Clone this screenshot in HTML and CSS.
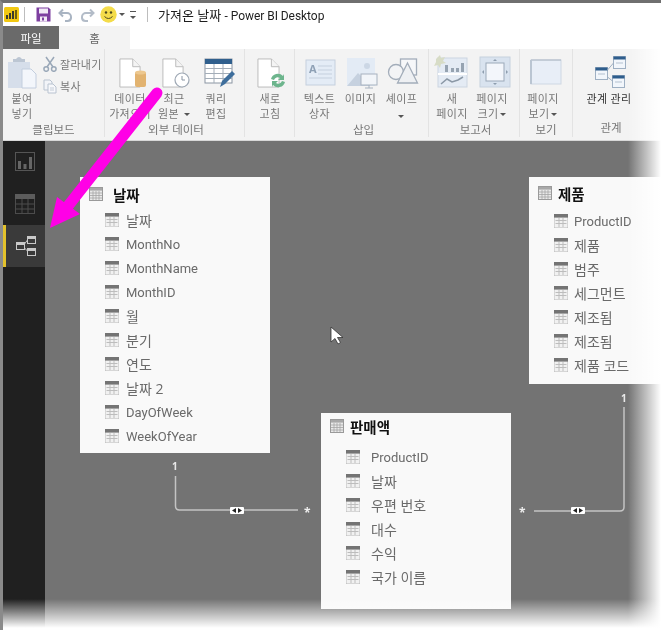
FILE: index.html
```html
<!DOCTYPE html>
<html lang="ko">
<head>
<meta charset="utf-8">
<title>가져온 날짜 - Power BI Desktop</title>
<link rel="stylesheet" href="styles.css">
</head>
<body>
<svg class="defs" width="0" height="0" aria-hidden="true">
  <symbol id="field" viewBox="0 0 14 14">
    <rect x="0" y="0" width="14" height="14" fill="#f1f1f1" stroke="#b0b0b0" stroke-width=".8"/>
    <rect x="0" y="0" width="14" height="3.600" fill="#747474"/>
    <path d="M1.500 6.500h11M1.500 9.500h11M5 4v9M9 4v9" stroke="#bdbdbd" stroke-width="1" fill="none"/>
  </symbol>
  <symbol id="tablehead" viewBox="0 0 14 14">
    <rect x=".5" y=".5" width="13" height="13" fill="#e9e9e9" stroke="#9a9a9a"/>
    <rect x="1" y="1" width="12" height="2.600" fill="#a8a8a8"/>
    <path d="M1 6h12M1 8.500h12M1 11h12M4 4v9M7 4v9M10 4v9" stroke="#a5a5a5" stroke-width=".8" fill="none"/>
  </symbol>
  <symbol id="doc" viewBox="0 0 24 31" preserveAspectRatio="none">
    <path d="M1 1h14l8 8v21H1z" fill="#fff" stroke="#b9b9b9"/>
    <path d="M15 1v8h8" fill="#f4f4f4" stroke="#b9b9b9"/>
  </symbol>
</svg>
<div class="app">
  <header class="titlebar">
    <svg class="qa-logo" width="15" height="15" viewBox="0 0 15 15"><rect width="15" height="15" rx="1.500" fill="#f2c811"/><path d="M2 12V8h2v4zM5 12V6h2v6zM8 12V4h2v8z" fill="#3a3a2a"/><path d="M11 12V3h2v9z" fill="#6b5d10"/></svg>
    <span class="qa-sep"></span>
    <svg class="qa-save" width="15" height="15" viewBox="0 0 15 15"><path d="M.5.5h12l2 2v12H.5z" fill="#7d3fa0"/><rect x="3" y="1.500" width="9" height="5" fill="#f1e9f6"/><rect x="4" y="9.500" width="7" height="5" fill="#f1e9f6"/><rect x="6" y="10.500" width="2" height="3" fill="#7d3fa0"/></svg>
    <svg class="qa-undo" width="15" height="14" viewBox="0 0 15 14"><path d="M5 1.500 1.500 5 5 8.500M2 5h7a4 4 0 0 1 4 4v1a3.500 3.500 0 0 1-3.500 3H7" fill="none" stroke="#a9b4c2" stroke-width="2"/></svg>
    <svg class="qa-redo" width="15" height="14" viewBox="0 0 15 14"><path d="M10 1.500 13.500 5 10 8.500M13 5H6a4 4 0 0 0-4 4v1a3.500 3.500 0 0 0 3.500 3H8" fill="none" stroke="#b3bcc8" stroke-width="2"/></svg>
    <svg class="qa-smile" width="17" height="17" viewBox="0 0 17 17"><circle cx="8.500" cy="8.500" r="8.200" fill="#f4dc4a"/><circle cx="6" cy="6.500" r="1.200" fill="#4d4a20"/><circle cx="11" cy="6.500" r="1.200" fill="#4d4a20"/><path d="M4.500 10.500q4 4 8 0" fill="none" stroke="#4d4a20"/></svg>
    <span class="caret qa-caret"></span>
    <span class="qa-more"><span class="caret"></span></span>
    <span class="qa-sep qa-sep-2"></span>
    <h1 class="title">가져온 날짜 <span class="title-en">- Power BI Desktop</span></h1>
  </header>

  <nav class="tabs">
    <span class="tab tab-file">파일</span>
    <span class="tab tab-home">홈</span>
  </nav>

  <section class="ribbon">
    <div class="group g-clip">
      <div class="items">
        <div class="btn w38">
          <svg class="ico" width="44" height="38" viewBox="0 0 44 38"><rect x="8" y="9" width="22" height="26" fill="#d6deea"/><path d="M13 9V6h3q3-4 6 0h3v3z" fill="#bcc6d3"/><path d="M22 16h9l5 5v14H22z" fill="#f3f6fb" stroke="#c3cede"/></svg>
          <span class="lbl">붙여<br>넣기</span>
        </div>
        <div class="small">
          <div class="s-row s-cut">
            <svg width="14" height="16" viewBox="0 0 14 16"><path d="M3 1l7 10M11 1 4 11" stroke="#9aa8b8" stroke-width="1.500" fill="none"/><circle cx="3.200" cy="13" r="2.300" fill="none" stroke="#9aa8b8" stroke-width="1.500"/><circle cx="10.800" cy="13" r="2.300" fill="none" stroke="#9aa8b8" stroke-width="1.500"/></svg>
            <span>잘라내기</span>
          </div>
          <div class="s-row s-copy">
            <svg width="14" height="15" viewBox="0 0 14 15"><path d="M1 1h6l2 2v8H1z" fill="#f2f4f8" stroke="#b9c3d0"/><path d="M5 5h5l3 3v6H5z" fill="#f7f8fb" stroke="#b9c3d0"/><path d="M7 9h4M7 11h4" stroke="#c4ccd7"/></svg>
            <span>복사</span>
          </div>
        </div>
      </div>
      <div class="g-name">클립보드</div>
    </div>

    <div class="group g-ext">
      <div class="items">
        <div class="btn w44">
          <svg class="ico" width="44" height="38" viewBox="0 0 44 38"><use href="#doc" x="11" y="5" width="22" height="30"/><rect x="27" y="19" width="11" height="15" rx="2" fill="#e2b370"/><ellipse cx="32.500" cy="19.500" rx="5.500" ry="2" fill="#edc88f"/></svg>
          <span class="lbl">데이터<br>가져오기</span>
        </div>
        <div class="btn w44">
          <svg class="ico" width="44" height="38" viewBox="0 0 44 38"><use href="#doc" x="10" y="5" width="22" height="30"/><circle cx="30" cy="27" r="7" fill="#fff" stroke="#9ea8b4" stroke-width="1.200"/><path d="M30 23v4h3" fill="none" stroke="#8a95a3"/></svg>
          <span class="lbl">최근<br>원본<i class="caret lbl-caret"></i></span>
        </div>
        <div class="btn w40">
          <svg class="ico" width="44" height="38" viewBox="0 0 44 38"><rect x="11" y="6" width="27" height="24" fill="#fff" stroke="#8b96a3"/><rect x="11" y="6" width="27" height="5" fill="#2f5f8d"/><path d="M11 15.500h27M11 20.500h27M11 25.500h27M20 11v19M29 11v19" stroke="#a3adb8"/><path d="M26 34l2-6 10-10 3 3-10 10z" fill="#3e6e9c"/></svg>
          <span class="lbl">쿼리<br>편집</span>
        </div>
      </div>
      <div class="g-name">외부 데이터</div>
    </div>

    <div class="group g-refresh">
      <div class="items">
        <div class="btn w50">
          <svg class="ico" width="44" height="38" viewBox="0 0 44 38"><use href="#doc" x="9" y="5" width="23" height="30"/><path d="M23 26a7 7 0 0 1 12-3l1-2v6h-6l2-2a4 4 0 0 0-6 2zM37 29a7 7 0 0 1-12 3l-1 2v-6h6l-2 2a4 4 0 0 0 6-2z" fill="#6db58d"/></svg>
          <span class="lbl">새로<br>고침</span>
        </div>
      </div>
    </div>

    <div class="group g-insert">
      <div class="items">
        <div class="btn w41">
          <svg class="ico" width="44" height="38" viewBox="0 0 44 38"><rect x="8" y="7" width="29" height="25" fill="#e4ecf6" stroke="#c5d0de"/><text x="11" y="20" class="ico-a">A</text><path d="M20 13h14M20 17h14M20 21h14M11 25h23" stroke="#c5d0de"/></svg>
          <span class="lbl">텍스트<br>상자</span>
        </div>
        <div class="btn w41">
          <svg class="ico" width="44" height="38" viewBox="0 0 44 38"><rect x="8" y="5" width="28" height="28" fill="#e3ebf5"/><circle cx="28" cy="13" r="3" fill="#ccd7e5"/><path d="M8 33l11-13 8 8 4 5z" fill="#c6d1df"/><rect x="22" y="21" width="16" height="11" fill="#f2f5f9" stroke="#a7b2bf"/><path d="M30 32v3M26 35h8" stroke="#a7b2bf"/></svg>
          <span class="lbl">이미지</span>
        </div>
        <div class="btn w41">
          <svg class="ico" width="44" height="38" viewBox="0 0 44 38"><rect x="20.500" y="6" width="16" height="16" fill="#f6f7f9" stroke="#a3adba" stroke-width="1.300"/><circle cx="16" cy="19" r="7.500" fill="#f3f4f6" stroke="#a3adba" stroke-width="1.300"/><path d="M27.500 10l10 20h-20z" fill="#eef0f3" stroke="#a3adba" stroke-width="1.300"/></svg>
          <span class="lbl">셰이프<br><i class="caret"></i></span>
        </div>
      </div>
      <div class="g-name">삽입</div>
    </div>

    <div class="group g-report">
      <div class="items">
        <div class="btn w40">
          <svg class="ico" width="44" height="38" viewBox="0 0 44 38"><rect x="8" y="5" width="29" height="29" fill="#e4ebf4" stroke="#ccd5e1"/><path d="M8 21h29" stroke="#fff" stroke-width="2"/><path d="M15 19v-7h3v7zM21 19v-4h3v4zM26 19v-4h3v4zM31 19V10h3v9z" fill="#96a3b1"/><path d="M11 31l6-5 5 3 6-2 5-3" fill="none" stroke="#8b98a6" stroke-width="1.500"/><path d="M6 6l4-4 1 3 4-1-2 4 3 2-5 1-1 4-2-3-4 1 2-4z" fill="#d7dcc6"/></svg>
          <span class="lbl">새<br>페이지</span>
        </div>
        <div class="btn w40">
          <svg class="ico" width="44" height="38" viewBox="0 0 44 38"><rect x="10" y="4" width="30" height="30" fill="#d9e3ef" stroke="#c6d1de"/><rect x="16" y="10" width="18" height="18" fill="#f3f6fb" stroke="#9ba9b9"/><path d="M25 6l2 2h-4zM25 32l2-2h-4zM12 19l2-2v4zM38 19l-2-2v4z" fill="#8e9dae"/></svg>
          <span class="lbl">페이지<br>크기<i class="caret lbl-caret-s"></i></span>
        </div>
      </div>
      <div class="g-name">보고서</div>
    </div>

    <div class="group g-view">
      <div class="items">
        <div class="btn w46">
          <svg class="ico" width="44" height="38" viewBox="0 0 44 38"><rect x="10" y="7" width="30" height="24" fill="#e8eef7" stroke="#cfd8e3"/><path d="M10 7h30" stroke="#aab5c2"/><path d="M10 7v24" stroke="#bac5d2" stroke-width="2"/></svg>
          <span class="lbl">페이지<br>보기<i class="caret lbl-caret-s"></i></span>
        </div>
      </div>
      <div class="g-name">보기</div>
    </div>

    <div class="group g-rel">
      <div class="items">
        <div class="btn w72">
          <svg class="ico" width="44" height="38" viewBox="0 0 44 38"><g fill="#f2f6fb" stroke="#9fb0c3"><rect x="8.500" y="14.500" width="12" height="12"/><rect x="26.500" y="3.500" width="12" height="12"/><rect x="25.500" y="22.500" width="12" height="12"/></g><g fill="#2e5d8c"><rect x="8.500" y="14.500" width="12" height="3"/><rect x="26.500" y="3.500" width="12" height="3"/><rect x="25.500" y="22.500" width="12" height="3"/></g><path d="M20.500 17l6-7M20.500 24l5 4" fill="none" stroke="#9fb0c3"/><path d="M11 21h7M29 10h7M28 29h7" stroke="#b4c1d0"/></svg>
          <span class="lbl lbl-dark">관계 관리</span>
        </div>
      </div>
      <div class="g-name">관계</div>
    </div>
  </section>

  <main class="workspace">
    <aside class="rail">
      <div class="rail-item">
        <svg width="20" height="20" viewBox="0 0 20 20"><rect x=".5" y=".5" width="19" height="18" fill="none" stroke="#555"/><path d="M3 17V9h3v8zM8.500 17v-5h3v5zM14 17V5h3v12z" fill="#666"/></svg>
      </div>
      <div class="rail-item">
        <svg width="20" height="20" viewBox="0 0 20 20"><rect x=".5" y=".5" width="19" height="19" fill="none" stroke="#4c4c4c"/><rect x="0" y="0" width="20" height="5" fill="#5c5c5c"/><path d="M0 10h20M0 15h20M7 5v15M13 5v15" stroke="#4c4c4c"/></svg>
      </div>
      <div class="rail-item active">
        <svg width="20" height="20" viewBox="0 0 20 20"><g fill="none" stroke="#c9c9c9"><rect x=".5" y="6.500" width="8" height="7"/><rect x="11.500" y=".5" width="8" height="7"/><rect x="11.500" y="12.500" width="8" height="7"/><path d="M8.500 8 11.500 4M8.500 12l3 3"/></g><path d="M1 7h7v2H1zM12 1h7v2h-7zM12 13h7v2h-7z" fill="#c9c9c9"/></svg>
      </div>
    </aside>

    <div class="canvas">
      <svg class="links" width="616" height="489" viewBox="0 0 616 489">
        <g fill="none" stroke="#c4c4c4" stroke-width="1.500">
          <path d="M130.500 335v30q0 4 4 4H253"/>
          <path d="M489 370H575q4 0 4-4V266"/>
        </g>
        <g fill="#e8e8e8" font-size="10" font-weight="700" class="link-text">
          <text x="127" y="329">1</text>
          <text x="576" y="261">1</text>
        </g>
        <g fill="#eee" font-size="12" font-weight="700" class="link-text">
          <text x="259" y="376">*</text>
          <text x="474" y="376">*</text>
        </g>
        <g>
          <rect x="185" y="366" width="14" height="7" rx="1" fill="#fff"/>
          <path d="M191 367v5l-4-2.500zM193 367v5l4-2.500z" fill="#222"/>
          <rect x="526" y="366" width="14" height="7" rx="1" fill="#fff"/>
          <path d="M532 367v5l-4-2.500zM534 367v5l4-2.500z" fill="#222"/>
        </g>
      </svg>

      <article class="card card-date">
        <h2 class="card-head"><svg width="14" height="14"><use href="#tablehead"/></svg><span>날짜</span></h2>
        <ul class="fields">
          <li><svg width="14" height="14"><use href="#field"/></svg>날짜</li>
          <li class="en"><svg width="14" height="14"><use href="#field"/></svg>MonthNo</li>
          <li class="en"><svg width="14" height="14"><use href="#field"/></svg>MonthName</li>
          <li class="en"><svg width="14" height="14"><use href="#field"/></svg>MonthID</li>
          <li><svg width="14" height="14"><use href="#field"/></svg>월</li>
          <li><svg width="14" height="14"><use href="#field"/></svg>분기</li>
          <li><svg width="14" height="14"><use href="#field"/></svg>연도</li>
          <li><svg width="14" height="14"><use href="#field"/></svg>날짜 2</li>
          <li class="en"><svg width="14" height="14"><use href="#field"/></svg>DayOfWeek</li>
          <li class="en"><svg width="14" height="14"><use href="#field"/></svg>WeekOfYear</li>
        </ul>
      </article>

      <article class="card card-product">
        <h2 class="card-head"><svg width="14" height="14"><use href="#tablehead"/></svg><span>제품</span></h2>
        <ul class="fields">
          <li class="en"><svg width="14" height="14"><use href="#field"/></svg>ProductID</li>
          <li><svg width="14" height="14"><use href="#field"/></svg>제품</li>
          <li><svg width="14" height="14"><use href="#field"/></svg>범주</li>
          <li><svg width="14" height="14"><use href="#field"/></svg>세그먼트</li>
          <li><svg width="14" height="14"><use href="#field"/></svg>제조됨</li>
          <li><svg width="14" height="14"><use href="#field"/></svg>제조됨</li>
          <li><svg width="14" height="14"><use href="#field"/></svg>제품 코드</li>
        </ul>
      </article>

      <article class="card card-sales">
        <h2 class="card-head"><svg width="14" height="14"><use href="#tablehead"/></svg><span>판매액</span></h2>
        <ul class="fields">
          <li class="en"><svg width="14" height="14"><use href="#field"/></svg>ProductID</li>
          <li><svg width="14" height="14"><use href="#field"/></svg>날짜</li>
          <li><svg width="14" height="14"><use href="#field"/></svg>우편 번호</li>
          <li><svg width="14" height="14"><use href="#field"/></svg>대수</li>
          <li><svg width="14" height="14"><use href="#field"/></svg>수익</li>
          <li><svg width="14" height="14"><use href="#field"/></svg>국가 이름</li>
        </ul>
      </article>

      <svg class="cursor" width="14" height="20" viewBox="0 0 14 20"><path d="M1 1v15l4-3.500 3 5.500 2.500-1.500-3-5H13z" fill="#fff" stroke="#333" stroke-width=".8"/></svg>
    </div>
  </main>

  <div class="fade-right"></div>
  <div class="fade-bottom"></div>

  <svg class="arrow" width="661" height="630" viewBox="0 0 661 630">
    <path d="M157 93 68 206" stroke="#ff00e6" stroke-width="11" stroke-linecap="round" fill="none"/>
    <path d="M50 228 57 197 80 214z" fill="#ff00e6"/>
  </svg>
</div>
</body>
</html>
```

FILE: styles.css
```css
* { box-sizing: border-box; }
html, body { margin: 0; padding: 0; background: #fff; }
body {
  width: 661px;
  height: 630px;
  overflow: hidden;
  font-family: "Open Sans", "Noto Sans CJK KR", sans-serif;
}
.defs { position: absolute; }

.app {
  position: relative;
  width: 661px;
  height: 630px;
  overflow: hidden;
  display: flex;
  flex-direction: column;
  background: #fff;
  border-top: 3px solid #6f6f6f;
  border-left: 3px solid #8a8a8a;
  filter: blur(.35px);
}

/* title bar */
.titlebar {
  height: 23px;
  flex: none;
  display: flex;
  align-items: center;
  padding-left: 1px;
  background: #fff;
}
.titlebar svg { flex: none; display: block; }
.qa-sep { width: 1px; height: 15px; background: #bdbdbd; margin-left: 5px; }
.qa-save { margin-left: 11px; }
.qa-undo { margin-left: 7px; }
.qa-redo { margin-left: 7px; }
.qa-smile { margin-left: 5px; }
.caret {
  display: inline-block;
  width: 0;
  height: 0;
  border-left: 3px solid transparent;
  border-right: 3px solid transparent;
  border-top: 3px solid #555;
}
.qa-caret { margin-left: 2px; }
.qa-more {
  margin-left: 5px;
  width: 6px;
  height: 8px;
  display: flex;
  align-items: flex-end;
  border-top: 1px solid #555;
}
.qa-sep-2 { margin-left: 11px; }
.title {
  margin: 0 0 0 10px;
  font-size: 13px;
  font-weight: 400;
  color: #1e1e1e;
  white-space: nowrap;
}
.title-en { font-family: Roboto, sans-serif; font-size: 12px; letter-spacing: -.05px; }

/* tabs */
.tabs { height: 23px; flex: none; display: flex; background: #fff; }
.tab {
  display: flex;
  align-items: center;
  justify-content: center;
  font-size: 11.5px;
}
.tab-file { width: 56px; background: #6a6a6a; color: #fff; }
.tab-home { width: 71px; background: #f3f3f3; color: #666; }

/* ribbon */
.ribbon {
  height: 92px;
  flex: none;
  display: flex;
  background: #f3f3f3;
  border-bottom: 1px solid #d8d8d8;
}
.group {
  display: flex;
  flex-direction: column;
  padding-top: 4px;
  border-right: 1px solid #e3e3e3;
  margin-bottom: 3px;
}
.items { height: 69px; display: flex; }
.g-name {
  height: 18px;
  line-height: 18px;
  text-align: center;
  font-size: 11.5px;
  color: #777;
}
.g-clip { width: 102px; }
.g-ext { width: 140px; padding-left: 3px; }
.g-refresh { width: 50px; }
.g-insert { width: 134px; padding-left: 4px; }
.g-report { width: 91px; padding-left: 3px; }
.g-view { width: 53px; }
.g-rel { width: 76px; border-right: 0; }

.btn {
  display: flex;
  flex-direction: column;
  align-items: center;
  flex: none;
}
.w38 { width: 38px; }
.w40 { width: 40px; }
.w41 { width: 41px; }
.w44 { width: 44px; }
.w46 { width: 46px; }
.w50 { width: 50px; }
.w72 { width: 72px; }
.ico { display: block; flex: none; }
.ico-a { font-size: 11px; font-weight: 700; fill: #8ea0b5; font-family: "Open Sans", sans-serif; }
.lbl {
  font-size: 11px;
  line-height: 15px;
  letter-spacing: .3px;
  color: #777;
  text-align: center;
  white-space: nowrap;
  font-style: normal;
}
.lbl-dark { color: #333; }
.lbl-caret { margin-left: 5px; vertical-align: 2px; }
.lbl-caret-s { margin-left: 2px; vertical-align: 2px; }

.small { margin-left: 2px; padding-top: 3px; display: flex; flex-direction: column; gap: 6px; }
.s-row {
  display: flex;
  align-items: center;
  gap: 3px;
  font-size: 11px;
  letter-spacing: .3px;
  color: #777;
  white-space: nowrap;
}
.s-row svg { display: block; flex: none; }

/* workspace */
.workspace { flex: 1; min-height: 0; display: flex; }
.rail { width: 42px; flex: none; background: #202020; }
.rail-item {
  height: 42px;
  display: flex;
  align-items: center;
  justify-content: center;
  padding-left: 1px;
}
.rail-item svg { display: block; }
.rail-item.active {
  background: #3a3a3a;
  border-left: 3px solid #e3c22c;
  padding-left: 0;
}

.canvas { flex: 1; position: relative; background: #737373; overflow: hidden; }
.links { position: absolute; left: 0; top: 0; }
.link-text { font-family: "Open Sans", sans-serif; }
.cursor { position: absolute; left: 285px; top: 185px; }

.card {
  position: absolute;
  background: #f9f9f9;
}
.card-date { left: 35px; top: 36px; width: 190px; height: 276px; }
.card-product { left: 484px; top: 36px; width: 135px; height: 207px; }
.card-sales { left: 276px; top: 272px; width: 190px; height: 196px; }

.card-head {
  margin: 0;
  display: flex;
  align-items: center;
  gap: 9px;
  padding-left: 9px;
  font-size: 14.5px;
  font-weight: 700;
  color: #111;
  height: 26px;
}
.card-head svg { display: block; flex: none; }
.card-date .card-head { margin: 4px 0 1px; gap: 10px; }
.card-product .card-head { margin: 3px 0 3px; gap: 6px; }
.card-sales .card-head { margin: 0 0 6px; gap: 6px; }

.fields {
  list-style: none;
  margin: 0;
  padding: 0 0 0 25px;
}
.fields li {
  height: 24px;
  display: flex;
  align-items: center;
  gap: 7px;
  font-size: 14px;
  color: #6a6a6a;
  white-space: nowrap;
}
.fields li.en { font-family: Roboto, sans-serif; font-size: 13px; }
.fields svg { display: block; flex: none; }
.card-product .fields li { gap: 6px; }
.card-sales .fields li { gap: 11px; }

/* overlays */
.fade-right {
  position: absolute;
  left: 625px;
  top: -3px;
  width: 33px;
  height: 633px;
  background: linear-gradient(to right, rgba(255,255,255,0), #fff);
}
.fade-right::after {
  content: "";
  position: absolute;
  left: 33px;
  top: 0;
  width: 10px;
  height: 100%;
  background: #fff;
}
.fade-bottom {
  position: absolute;
  left: -3px;
  top: 596px;
  width: 661px;
  height: 34px;
  background: linear-gradient(to bottom, rgba(255,255,255,0), #fff 85%);
}
.arrow { position: absolute; left: -3px; top: -3px; pointer-events: none; }
```
